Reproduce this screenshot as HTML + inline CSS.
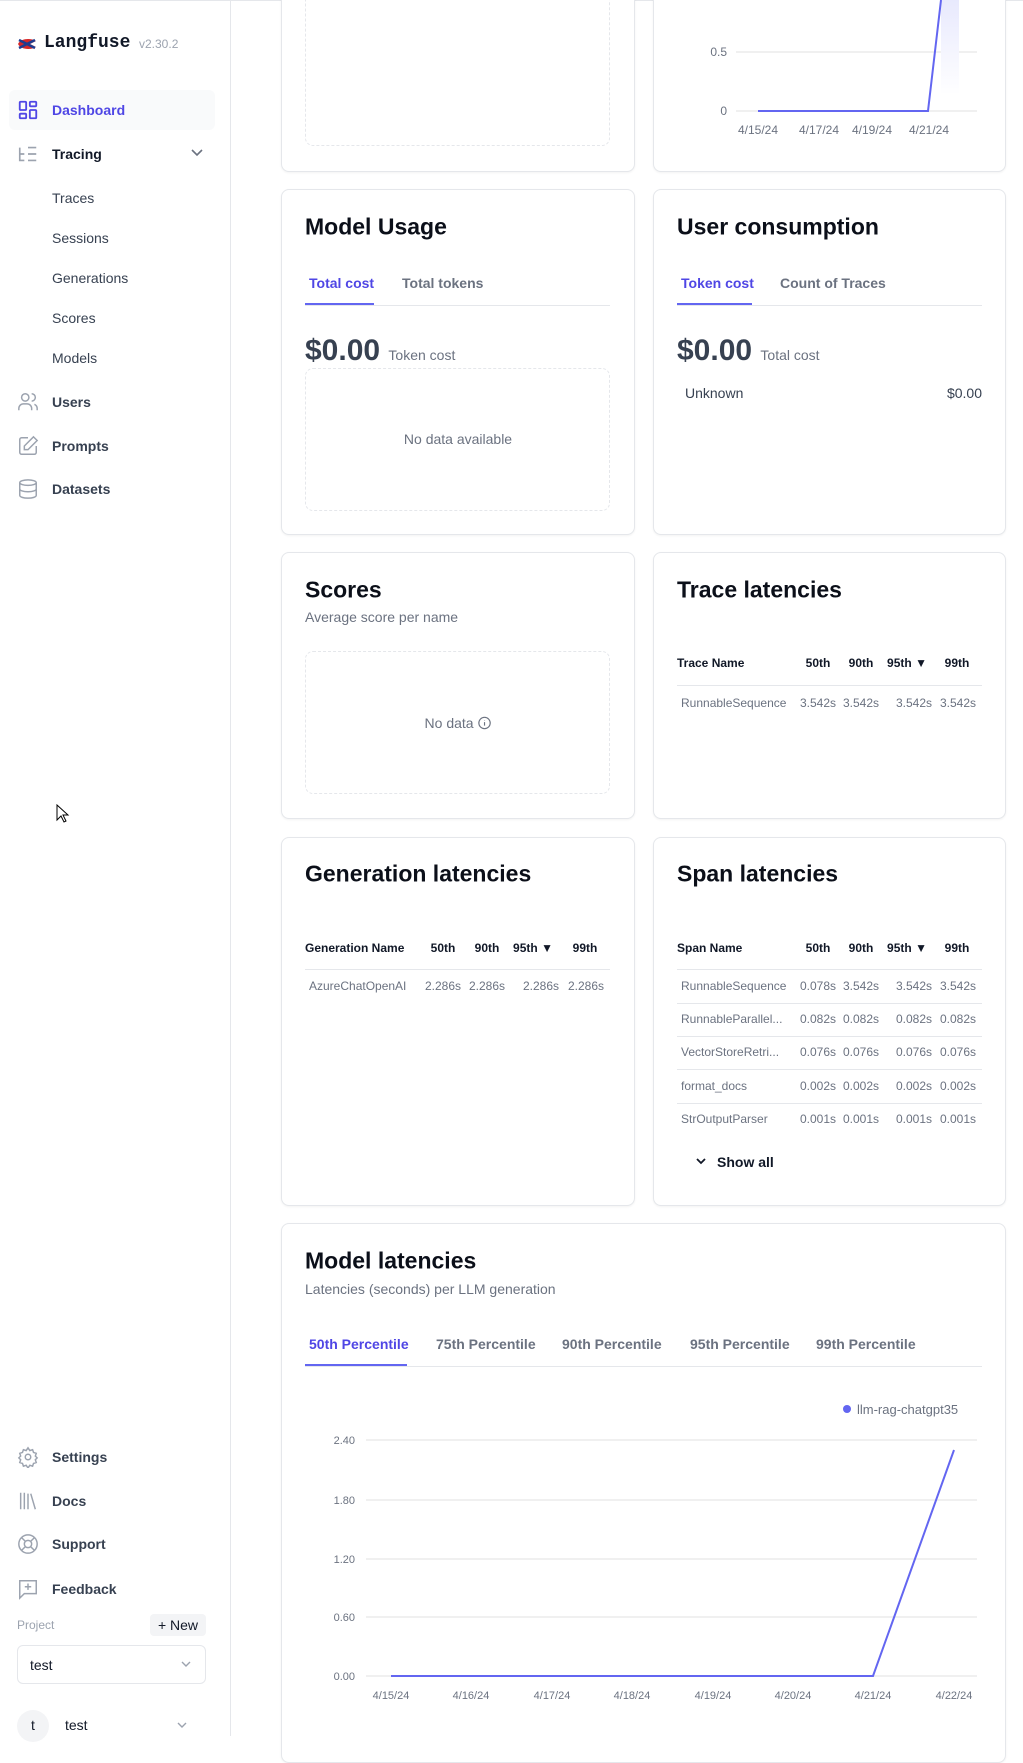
<!DOCTYPE html>
<html><head><meta charset="utf-8"><style>
*{box-sizing:border-box;margin:0;padding:0}
body{width:1023px;height:1736px;overflow:hidden;background:#fff;font-family:"Liberation Sans",sans-serif;color:#111827;position:relative}
.a{position:absolute;white-space:nowrap}
.side{position:absolute;left:0;top:0;width:231px;height:1736px;border-right:1px solid #e5e7eb}
.nav{position:absolute;left:52px;font-size:14px;font-weight:600;color:#374151;transform:translateY(-50%)}
.sub{position:absolute;left:52px;font-size:14px;color:#374151;transform:translateY(-50%)}
.ic{position:absolute;left:17px;width:22px;height:22px;transform:translateY(-50%)}
.card{position:absolute;border:1px solid #e5e7eb;border-radius:8px;box-shadow:0 1px 2px rgba(0,0,0,.05);background:#fff}
.t{position:absolute;font-size:23px;font-weight:600;color:#0b0f19;transform:translateY(-50%)}
.g{color:#6b7280}
.dash{position:absolute;border:1px dashed #e5e7eb;border-radius:8px}
.c{transform:translate(-50%,-50%)}
.m{transform:translateY(-50%)}
.hl{position:absolute;height:1px;background:#e5e7eb}
.tab{font-size:14px;font-weight:600;color:#6b7280}
.th{font-size:12px;font-weight:600;color:#111827}
.td{font-size:12px;color:#6b7280}
</style></head><body>
<div class="a" style="left:0;top:0;width:1023px;height:1px;background:#e5e7eb"></div>
<div class="side">
 <svg class="a" style="left:16px;top:36px" width="22" height="16" viewBox="0 0 22 16"><path d="M2 8 C5 2 15 2 20 5 L14 8 L20 11 C15 14 5 14 2 8Z" fill="#d62728"/><path d="M3 4 L19 12 M3 12 L19 4" stroke="#1f3b8f" stroke-width="2.5"/></svg>
 <div class="a" style="left:44px;top:33px;font-family:'Liberation Mono',monospace;font-weight:700;font-size:18px">Langfuse</div>
 <div class="a" style="left:139px;top:37px;font-size:12px;color:#9ca3af">v2.30.2</div>
 <div class="a" style="left:9px;top:90px;width:206px;height:40px;background:#f9fafb;border-radius:6px"></div>
 <svg class="ic" style="top:110px" viewBox="0 0 24 24" fill="none" stroke="#4f46e5" stroke-width="2"><rect x="3" y="3" width="7" height="9" rx="1"/><rect x="14" y="3" width="7" height="5" rx="1"/><rect x="14" y="12" width="7" height="9" rx="1"/><rect x="3" y="16" width="7" height="5" rx="1"/></svg>
 <div class="nav" style="top:110px;color:#4f46e5">Dashboard</div>
 <svg class="ic" style="top:154px" viewBox="0 0 24 24" fill="none" stroke="#9ca3af" stroke-width="1.8"><path d="M3 5v14h5M3 12h5M12 5h9M12 12h9M12 19h9"/></svg>
 <div class="nav" style="top:154px;color:#111827">Tracing</div>
 <svg class="a" style="left:190px;top:148px" width="14" height="10" viewBox="0 0 14 10" fill="none" stroke="#6b7280" stroke-width="1.6"><path d="M2 2l5 5 5-5"/></svg>
 <div class="sub" style="top:198px">Traces</div>
 <div class="sub" style="top:238px">Sessions</div>
 <div class="sub" style="top:278px">Generations</div>
 <div class="sub" style="top:318px">Scores</div>
 <div class="sub" style="top:358px">Models</div>
 <svg class="ic" style="top:402px" viewBox="0 0 24 24" fill="none" stroke="#9ca3af" stroke-width="1.6"><circle cx="9" cy="7" r="4"/><path d="M2 21v-2a5 5 0 015-5h4a5 5 0 015 5v2M16 3a4 4 0 010 8M22 21v-2a5 5 0 00-3-4.5"/></svg>
 <div class="nav" style="top:402px">Users</div>
 <svg class="ic" style="top:446px" viewBox="0 0 24 24" fill="none" stroke="#9ca3af" stroke-width="1.6"><path d="M12 3H5a2 2 0 00-2 2v14a2 2 0 002 2h14a2 2 0 002-2v-7"/><path d="M18 2l4 4-10 10H8v-4z"/></svg>
 <div class="nav" style="top:446px">Prompts</div>
 <svg class="ic" style="top:489px" viewBox="0 0 24 24" fill="none" stroke="#9ca3af" stroke-width="1.6"><ellipse cx="12" cy="5" rx="9" ry="3"/><path d="M3 5v14c0 1.7 4 3 9 3s9-1.3 9-3V5M3 12c0 1.7 4 3 9 3s9-1.3 9-3"/></svg>
 <div class="nav" style="top:489px">Datasets</div>
 <svg class="ic" style="top:1457px" viewBox="0 0 24 24" fill="none" stroke="#9ca3af" stroke-width="1.6"><circle cx="12" cy="12" r="3"/><path d="M12 2l2 3 3-1 1 3 3 1-1 3 2 2-2 2 1 3-3 1-1 3-3-1-2 3-2-3-3 1-1-3-3-1 1-3-2-2 2-2-1-3 3-1 1-3 3 1z"/></svg>
 <div class="nav" style="top:1457px">Settings</div>
 <svg class="ic" style="top:1501px" viewBox="0 0 24 24" fill="none" stroke="#9ca3af" stroke-width="1.6"><path d="M4 3v18M8 3v18M12 4v17M15 4l5 17"/></svg>
 <div class="nav" style="top:1501px">Docs</div>
 <svg class="ic" style="top:1544px" viewBox="0 0 24 24" fill="none" stroke="#9ca3af" stroke-width="1.6"><circle cx="12" cy="12" r="10"/><circle cx="12" cy="12" r="4"/><path d="M5 5l4 4M15 15l4 4M19 5l-4 4M9 15l-4 4"/></svg>
 <div class="nav" style="top:1544px">Support</div>
 <svg class="ic" style="top:1589px" viewBox="0 0 24 24" fill="none" stroke="#9ca3af" stroke-width="1.6"><path d="M3 3h18v14H8l-5 5z"/><path d="M12 6v7M8.5 9.5h7"/></svg>
 <div class="nav" style="top:1589px">Feedback</div>
 <div class="a m" style="left:17px;top:1625px;font-size:12px;color:#9ca3af">Project</div>
 <div class="a" style="left:150px;top:1614px;width:56px;height:22px;background:#f3f4f6;border-radius:4px;font-size:14px;line-height:22px;text-align:center;color:#111827">+ New</div>
 <div class="a" style="left:17px;top:1645px;width:189px;height:39px;border:1px solid #e5e7eb;border-radius:6px"></div>
 <div class="a m" style="left:30px;top:1665px;font-size:14px">test</div>
 <svg class="a" style="left:180px;top:1660px" width="12" height="9" viewBox="0 0 12 9" fill="none" stroke="#9ca3af" stroke-width="1.4"><path d="M2 2l4 4 4-4"/></svg>
 <div class="a" style="left:17px;top:1710px;width:32px;height:32px;border-radius:50%;background:#f3f4f6;font-size:14px;text-align:center;line-height:30px">t</div>
 <div class="a m" style="left:65px;top:1725px;font-size:14px">test</div>
 <svg class="a" style="left:176px;top:1721px" width="12" height="9" viewBox="0 0 12 9" fill="none" stroke="#9ca3af" stroke-width="1.4"><path d="M2 2l4 4 4-4"/></svg>
</div>
<svg class="a" style="left:56px;top:804px" width="14" height="20" viewBox="0 0 14 20"><path d="M1 1v15l4-4 3 6 2-1-3-6h5z" fill="#fff" stroke="#000" stroke-width="1"/></svg>

<div class="card" style="left:281px;top:-20px;width:354px;height:192px"></div>
<div class="dash" style="left:305px;top:-20px;width:305px;height:166px"></div>
<div class="card" style="left:653px;top:-20px;width:353px;height:192px"></div>
<svg class="a" style="left:653px;top:0" width="353" height="172">
 <defs><linearGradient id="gr" x1="0" y1="0" x2="0" y2="1"><stop offset="0" stop-color="#e8e9fd"/><stop offset="1" stop-color="#fff"/></linearGradient></defs>
 <line x1="83" y1="52" x2="324" y2="52" stroke="#f0f0f0" stroke-width="2"/>
 <line x1="83" y1="111" x2="324" y2="111" stroke="#f0f0f0" stroke-width="2"/>
 <rect x="288" y="0" width="18" height="95" fill="url(#gr)"/>
 <polyline points="105,111 275,111 288,0" fill="none" stroke="#6366f1" stroke-width="2"/>
 <text x="74" y="56" font-size="12" fill="#6b7280" text-anchor="end" font-family="Liberation Sans">0.5</text>
 <text x="74" y="115" font-size="12" fill="#6b7280" text-anchor="end" font-family="Liberation Sans">0</text>
 <g font-size="12" fill="#6b7280" text-anchor="middle" font-family="Liberation Sans"><text x="105" y="134">4/15/24</text><text x="166" y="134">4/17/24</text><text x="219" y="134">4/19/24</text><text x="276" y="134">4/21/24</text></g>
</svg>

<div class="card" style="left:281px;top:189px;width:354px;height:346px"></div>
<div class="t" style="left:305px;top:227px">Model Usage</div>
<div class="a tab m" style="left:309px;top:283px;color:#4f46e5">Total cost</div>
<div class="a tab m" style="left:402px;top:283px">Total tokens</div>
<div class="hl" style="left:305px;top:305px;width:305px"></div>
<div class="a" style="left:305px;top:303px;width:69px;height:2px;background:#6366f1"></div>
<div class="a m" style="left:305px;top:351px;font-size:30px;font-weight:600;color:#374151">$0.00 <span style="font-size:14px;font-weight:400;color:#6b7280">Token cost</span></div>
<div class="dash" style="left:305px;top:368px;width:305px;height:143px"></div>
<div class="a c g" style="left:458px;top:439px;font-size:14px">No data available</div>

<div class="card" style="left:653px;top:189px;width:353px;height:346px"></div>
<div class="t" style="left:677px;top:227px">User consumption</div>
<div class="a tab m" style="left:681px;top:283px;color:#4f46e5">Token cost</div>
<div class="a tab m" style="left:780px;top:283px">Count of Traces</div>
<div class="hl" style="left:677px;top:305px;width:305px"></div>
<div class="a" style="left:677px;top:303px;width:75px;height:2px;background:#6366f1"></div>
<div class="a m" style="left:677px;top:351px;font-size:30px;font-weight:600;color:#374151">$0.00 <span style="font-size:14px;font-weight:400;color:#6b7280">Total cost</span></div>
<div class="a m" style="left:685px;top:393px;font-size:14px;color:#374151">Unknown</div>
<div class="a m" style="right:41px;top:393px;font-size:14px;color:#374151">$0.00</div>

<div class="card" style="left:281px;top:552px;width:354px;height:267px"></div>
<div class="t" style="left:305px;top:590px">Scores</div>
<div class="a m g" style="left:305px;top:617px;font-size:14px">Average score per name</div>
<div class="dash" style="left:305px;top:651px;width:305px;height:143px"></div>
<div class="a c g" style="left:458px;top:723px;font-size:14px">No data <svg width="14" height="14" viewBox="0 0 16 16" style="vertical-align:-2px" fill="none" stroke="#6b7280" stroke-width="1.3"><circle cx="8" cy="8" r="6.5"/><path d="M8 7v4M8 4.6v.4"/></svg></div>

<div class="card" style="left:653px;top:552px;width:353px;height:267px"></div>
<div class="t" style="left:677px;top:590px">Trace latencies</div>
<div class="a th m" style="left:677px;top:663px">Trace Name</div>
<div class="a th c" style="left:818px;top:663px">50th</div><div class="a th c" style="left:861px;top:663px">90th</div><div class="a th c" style="left:907px;top:663px">95th ▼</div><div class="a th c" style="left:957px;top:663px">99th</div>
<div class="hl" style="left:677px;top:685px;width:305px"></div>
<div class="a td m" style="left:681px;top:703px">RunnableSequence</div>
<div class="a td c" style="left:818px;top:703px">3.542s</div><div class="a td c" style="left:861px;top:703px">3.542s</div><div class="a td c" style="left:914px;top:703px">3.542s</div><div class="a td c" style="left:958px;top:703px">3.542s</div>

<div class="card" style="left:281px;top:837px;width:354px;height:369px"></div>
<div class="t" style="left:305px;top:874px">Generation latencies</div>
<div class="a th m" style="left:305px;top:948px">Generation Name</div>
<div class="a th c" style="left:443px;top:948px">50th</div><div class="a th c" style="left:487px;top:948px">90th</div><div class="a th c" style="left:533px;top:948px">95th ▼</div><div class="a th c" style="left:585px;top:948px">99th</div>
<div class="hl" style="left:305px;top:969px;width:305px"></div>
<div class="a td m" style="left:309px;top:986px">AzureChatOpenAI</div>
<div class="a td c" style="left:443px;top:986px">2.286s</div><div class="a td c" style="left:487px;top:986px">2.286s</div><div class="a td c" style="left:541px;top:986px">2.286s</div><div class="a td c" style="left:586px;top:986px">2.286s</div>

<div class="card" style="left:653px;top:837px;width:353px;height:369px"></div>
<div class="t" style="left:677px;top:874px">Span latencies</div>
<div class="a th m" style="left:677px;top:948px">Span Name</div>
<div class="a th c" style="left:818px;top:948px">50th</div><div class="a th c" style="left:861px;top:948px">90th</div><div class="a th c" style="left:907px;top:948px">95th ▼</div><div class="a th c" style="left:957px;top:948px">99th</div>
<div class="hl" style="left:677px;top:969px;width:305px"></div>
<div class="a td m" style="left:681px;top:986px">RunnableSequence</div><div class="a td c" style="left:818px;top:986px">0.078s</div><div class="a td c" style="left:861px;top:986px">3.542s</div><div class="a td c" style="left:914px;top:986px">3.542s</div><div class="a td c" style="left:958px;top:986px">3.542s</div>
<div class="hl" style="left:677px;top:1003px;width:305px"></div>
<div class="a td m" style="left:681px;top:1019px">RunnableParallel...</div><div class="a td c" style="left:818px;top:1019px">0.082s</div><div class="a td c" style="left:861px;top:1019px">0.082s</div><div class="a td c" style="left:914px;top:1019px">0.082s</div><div class="a td c" style="left:958px;top:1019px">0.082s</div>
<div class="hl" style="left:677px;top:1036px;width:305px"></div>
<div class="a td m" style="left:681px;top:1052px">VectorStoreRetri...</div><div class="a td c" style="left:818px;top:1052px">0.076s</div><div class="a td c" style="left:861px;top:1052px">0.076s</div><div class="a td c" style="left:914px;top:1052px">0.076s</div><div class="a td c" style="left:958px;top:1052px">0.076s</div>
<div class="hl" style="left:677px;top:1069px;width:305px"></div>
<div class="a td m" style="left:681px;top:1086px">format_docs</div><div class="a td c" style="left:818px;top:1086px">0.002s</div><div class="a td c" style="left:861px;top:1086px">0.002s</div><div class="a td c" style="left:914px;top:1086px">0.002s</div><div class="a td c" style="left:958px;top:1086px">0.002s</div>
<div class="hl" style="left:677px;top:1103px;width:305px"></div>
<div class="a td m" style="left:681px;top:1119px">StrOutputParser</div><div class="a td c" style="left:818px;top:1119px">0.001s</div><div class="a td c" style="left:861px;top:1119px">0.001s</div><div class="a td c" style="left:914px;top:1119px">0.001s</div><div class="a td c" style="left:958px;top:1119px">0.001s</div>
<svg class="a" style="left:695px;top:1157px" width="12" height="9" viewBox="0 0 12 9" fill="none" stroke="#111827" stroke-width="1.8"><path d="M2 2l4 4 4-4"/></svg>
<div class="a m" style="left:717px;top:1162px;font-size:14px;font-weight:600">Show all</div>

<div class="card" style="left:281px;top:1223px;width:725px;height:540px"></div>
<div class="t" style="left:305px;top:1261px">Model latencies</div>
<div class="a m g" style="left:305px;top:1289px;font-size:14px">Latencies (seconds) per LLM generation</div>
<div class="a tab m" style="left:309px;top:1344px;color:#4f46e5">50th Percentile</div>
<div class="a tab m" style="left:436px;top:1344px">75th Percentile</div>
<div class="a tab m" style="left:562px;top:1344px">90th Percentile</div>
<div class="a tab m" style="left:690px;top:1344px">95th Percentile</div>
<div class="a tab m" style="left:816px;top:1344px">99th Percentile</div>
<div class="hl" style="left:305px;top:1366px;width:677px"></div>
<div class="a" style="left:305px;top:1364px;width:102px;height:2px;background:#6366f1"></div>
<svg class="a" style="left:281px;top:1390px" width="725" height="346">
 <circle cx="566" cy="19" r="4" fill="#6366f1"/>
 <text x="576" y="24" font-size="13" fill="#6b7280" font-family="Liberation Sans">llm-rag-chatgpt35</text>
 <g stroke="#f0f0f0" stroke-width="2"><line x1="85" y1="50" x2="696" y2="50"/><line x1="85" y1="110" x2="696" y2="110"/><line x1="85" y1="169" x2="696" y2="169"/><line x1="85" y1="227" x2="696" y2="227"/><line x1="85" y1="286" x2="696" y2="286"/></g>
 <g font-size="11" fill="#6b7280" text-anchor="end" font-family="Liberation Sans"><text x="74" y="54">2.40</text><text x="74" y="114">1.80</text><text x="74" y="173">1.20</text><text x="74" y="231">0.60</text><text x="74" y="290">0.00</text></g>
 <polyline points="110,286 592,286 673,60" fill="none" stroke="#6366f1" stroke-width="2"/>
 <g font-size="11" fill="#6b7280" text-anchor="middle" font-family="Liberation Sans"><text x="110" y="309">4/15/24</text><text x="190" y="309">4/16/24</text><text x="271" y="309">4/17/24</text><text x="351" y="309">4/18/24</text><text x="432" y="309">4/19/24</text><text x="512" y="309">4/20/24</text><text x="592" y="309">4/21/24</text><text x="673" y="309">4/22/24</text></g>
</svg>
</body></html>
